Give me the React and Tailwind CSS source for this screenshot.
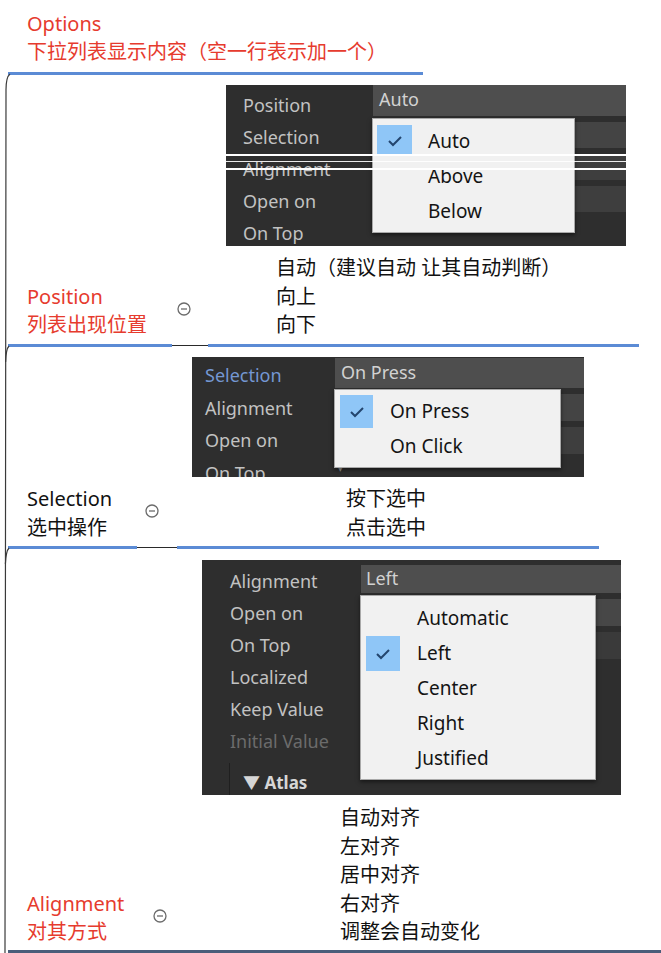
import React from 'react';

const FONT = { fontFamily: '"Noto Sans", "Noto Sans CJK SC", sans-serif' };

const Collapse = ({ className = '' }) => (
  <svg width="14" height="14" viewBox="0 0 14 14" className={className}>
    <circle cx="7" cy="7" r="6" fill="none" stroke="#6b6b6b" strokeWidth="1.3" />
    <line x1="4" y1="7" x2="10" y2="7" stroke="#6b6b6b" strokeWidth="1.3" />
  </svg>
);

const Check = () => (
  <svg width="16" height="12" viewBox="0 0 16 12">
    <polyline points="2,6 6,10 14,2" fill="none" stroke="#23456e" strokeWidth="2" />
  </svg>
);

// white dropdown list that sits over the inspector panel
const Popup = ({ className, items, checked, rowH, textX, box }) => (
  <div className={`absolute bg-[#f1f1f1] border border-[#a9a9a9] shadow-[0_2px_4px_rgba(0,0,0,0.5)] ${className}`}>
    {items.map((item, i) => (
      <div key={item} className="relative flex items-center text-[19px] text-[#141414]" style={{ height: rowH, paddingLeft: textX }}>
        {i === checked && (
          <div className={`absolute flex items-center justify-center bg-[#8fc6f7] ${box}`}>
            <Check />
          </div>
        )}
        {item}
      </div>
    ))}
  </div>
);

const Label = ({ children, className = 'text-[#c2c2c2]' }) => (
  <div className={`h-[32px] leading-[32px] whitespace-nowrap ${className}`}>{children}</div>
);

const Divider = ({ a, b, c }) => (
  <div className="flex items-center h-[3px]">
    <div className="ml-[8px] h-[3px] bg-[#5b8bd5]" style={{ width: a }} />
    <div className="h-px bg-[#2a2a2a]" style={{ width: b }} />
    <div className="h-[3px] bg-[#5b8bd5]" style={{ width: c }} />
  </div>
);

const Notes = ({ lines }) => (
  <div className="text-[20px] leading-[28.5px] text-[#111]">
    {lines.map((l) => (
      <div key={l} className="whitespace-nowrap">{l}</div>
    ))}
  </div>
);

const App = () => {
  return (
    <div className="relative w-[661px] h-[953px] bg-white overflow-hidden" style={FONT}>
      {/* mind map connector on the left */}
      <svg className="absolute left-0 top-[72px]" width="14" height="881" viewBox="0 0 14 881">
        <path d="M10 2 Q6 5 6 18 L5 881" fill="none" stroke="#3a3a3a" strokeWidth="1.2" />
        <path d="M9 274 Q6 277 5.6 290" fill="none" stroke="#3a3a3a" strokeWidth="1.2" />
        <path d="M9 476 Q6 479 5.4 492" fill="none" stroke="#3a3a3a" strokeWidth="1.2" />
      </svg>

      {/* Options header */}
      <div className="pt-[10px] pl-[27px] text-[20px] leading-[28px] text-[#e63b2e]">
        <div>Options</div>
        <div className="whitespace-nowrap">下拉列表显示内容（空一行表示加一个）</div>
      </div>
      <div className="mt-[6px] ml-[8px] w-[415px] h-[3px] bg-[#5b8bd5]" />

      {/* Position */}
      <div className="mt-[10px] ml-[226px] relative w-[400px] h-[161px] bg-[#2e2e2e] overflow-hidden text-[18px]">
        <div className="flex">
          <div className="w-[147px] pl-[17px] pt-[4px]">
            <Label>Position</Label>
            <Label>Selection</Label>
            <Label>Alignment</Label>
            <Label>Open on</Label>
            <Label>On Top</Label>
          </div>
          <div className="flex-1 flex flex-col gap-[6px]">
            <div className="h-[31px] bg-[#4e4e4e] pl-[6px] leading-[29px] text-[#d2d2d2]">Auto</div>
            <div className="h-[26px] bg-[#444444]" />
            <div className="h-[26px] bg-[#3e3e3e]" />
            <div className="h-[26px] bg-[#3e3e3e]" />
            <div className="pl-[3px] text-[13px] leading-[14px] text-[#9a9a9a]">▾</div>
          </div>
        </div>
        <Popup
          className="left-[146px] top-[33px] w-[203px] h-[115px] pt-[5px]"
          items={['Auto', 'Above', 'Below']}
          checked={0}
          rowH={35}
          textX={55}
          box="left-[4px] top-[1px] w-[35px] h-[31px]"
        />
        <div className="absolute left-0 right-0 top-[69px] h-[2px] bg-white" />
        <div className="absolute left-0 right-0 top-[76px] h-[1px] bg-white/90" />
        <div className="absolute left-0 right-0 top-[83px] h-[2px] bg-white" />
      </div>
      <div className="mt-[8px] flex items-end">
        <div className="flex items-center">
          <div className="w-[177px] pl-[27px] text-[20px] leading-[28.5px] text-[#e63b2e] whitespace-nowrap">
            <div>Position</div>
            <div>列表出现位置</div>
          </div>
          <Collapse className="mt-[-4px]" />
        </div>
        <div className="ml-[85px]">
          <Notes lines={['自动（建议自动 让其自动判断）', '向上', '向下']} />
        </div>
      </div>
      <div className="mt-[4.5px]">
        <Divider a={164} b={36} c={431} />
      </div>

      {/* Selection */}
      <div className="mt-[10px] ml-[192px] relative w-[392px] h-[120px] bg-[#2e2e2e] overflow-hidden text-[18px]">
        <div className="flex">
          <div className="w-[143px] pl-[13px] pt-[2px] [&>div]:h-[32.5px] [&>div]:leading-[32.5px]">
            <Label className="text-[#7497d2]">Selection</Label>
            <Label>Alignment</Label>
            <Label>Open on</Label>
            <Label>On Top</Label>
          </div>
          <div className="flex-1 flex flex-col gap-[6px] pt-[1px]">
            <div className="h-[30px] bg-[#4e4e4e] pl-[6px] leading-[28px] text-[#d2d2d2]">On Press</div>
            <div className="h-[27px] bg-[#444444]" />
            <div className="h-[27px] bg-[#3e3e3e]" />
            <div className="pl-[2px] text-[13px] leading-[14px] text-[#9a9a9a]">▾</div>
          </div>
        </div>
        <Popup
          className="left-[142px] top-[32px] w-[227px] h-[79px] pt-[4px]"
          items={['On Press', 'On Click']}
          checked={0}
          rowH={35}
          textX={55}
          box="left-[5px] top-[1px] w-[33px] h-[33px]"
        />
      </div>
      <div className="mt-[8px] flex items-end">
        <div className="flex items-center">
          <div className="w-[145px] pl-[27px] text-[20px] leading-[28.5px] text-[#111] whitespace-nowrap">
            <div>Selection</div>
            <div>选中操作</div>
          </div>
          <Collapse className="mt-[-5px]" />
        </div>
        <div className="ml-[187px]">
          <Notes lines={['按下选中', '点击选中']} />
        </div>
      </div>
      <div className="mt-[4px]">
        <Divider a={129} b={40} c={422} />
      </div>

      {/* Alignment */}
      <div className="mt-[11px] ml-[202px] relative w-[419px] h-[235px] bg-[#2e2e2e] overflow-hidden text-[18px]">
        <div className="flex">
          <div className="w-[159px] pl-[28px] pt-[5px]">
            <Label>Alignment</Label>
            <Label>Open on</Label>
            <Label>On Top</Label>
            <Label>Localized</Label>
            <Label>Keep Value</Label>
            <Label className="text-[#6b6b6b]">Initial Value</Label>
          </div>
          <div className="flex-1 flex flex-col gap-[6px] pt-[5px]">
            <div className="h-[28px] bg-[#4e4e4e] pl-[5px] leading-[26px] text-[#d2d2d2]">Left</div>
            <div className="h-[27px] bg-[#474747]" />
            <div className="h-[27px] bg-[#3a3a3a]" />
          </div>
        </div>
        <div className="absolute left-[27px] top-[203px] h-[40px] border-l border-[#1f1f1f] pl-[13px] flex items-center text-[17px] font-bold text-[#d6d6d6]">
          ▼ Atlas
        </div>
        <Popup
          className="left-[158px] top-[35px] w-[236px] h-[185px] pt-[5px]"
          items={['Automatic', 'Left', 'Center', 'Right', 'Justified']}
          checked={1}
          rowH={35}
          textX={56}
          box="left-[5px] top-[0px] w-[34px] h-[35px]"
        />
      </div>
      <div className="mt-[9px] flex items-end">
        <div className="flex items-center">
          <div className="w-[153px] pl-[27px] text-[20px] leading-[28.5px] text-[#e63b2e] whitespace-nowrap">
            <div>Alignment</div>
            <div>对其方式</div>
          </div>
          <Collapse className="mt-[-5px]" />
        </div>
        <div className="ml-[173px]">
          <Notes lines={['自动对齐', '左对齐', '居中对齐', '右对齐', '调整会自动变化']} />
        </div>
      </div>
      <div className="absolute left-[8px] right-0 bottom-0 h-[3px] bg-[#4a5d7a]" />
    </div>
  );
};

export default App;
